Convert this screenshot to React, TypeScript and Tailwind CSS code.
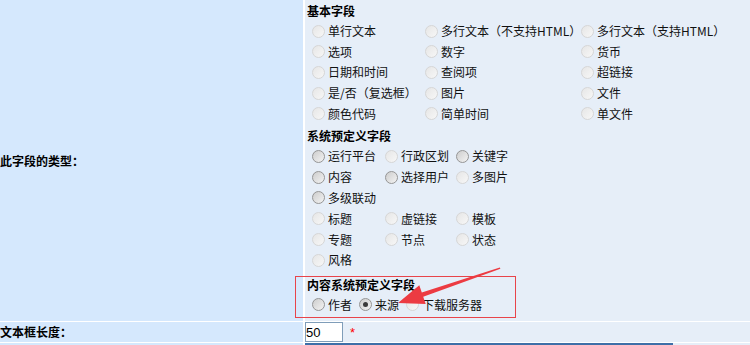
import clsx from 'clsx'

type Tone = 'light' | 'dark'

interface Opt {
  label: string
  tone?: Tone
  checked?: boolean
}

const basicFields: string[][] = [
  ['单行文本', '多行文本（不支持HTML）', '多行文本（支持HTML）'],
  ['选项', '数字', '货币'],
  ['日期和时间', '查阅项', '超链接'],
  ['是/否（复选框）', '图片', '文件'],
  ['颜色代码', '简单时间', '单文件'],
]

const systemFields: Opt[][] = [
  [{ label: '运行平台', tone: 'dark' }, { label: '行政区划' }, { label: '关键字', tone: 'dark' }],
  [{ label: '内容', tone: 'dark' }, { label: '选择用户', tone: 'dark' }, { label: '多图片' }],
  [{ label: '多级联动', tone: 'dark' }],
  [{ label: '标题' }, { label: '虚链接' }, { label: '模板' }],
  [{ label: '专题' }, { label: '节点' }, { label: '状态' }],
  [{ label: '风格' }],
]

const contentFields: Opt[] = [
  { label: '作者', tone: 'dark' },
  { label: '来源', tone: 'dark', checked: true },
  { label: '下载服务器' },
]

function Radio({ tone = 'light', checked = false }: { tone?: Tone; checked?: boolean }) {
  return (
    <span
      className={clsx(
        'inline-flex items-center justify-center w-[13px] h-[13px] rounded-full border shrink-0',
        tone === 'dark'
          ? 'border-[#959595] bg-[linear-gradient(135deg,#cdcdcd,#f3f3f3)]'
          : 'border-[#d6d6d6] bg-[linear-gradient(135deg,#e6e6e6,#f7f7f7)]'
      )}
    >
      {checked && <span className="w-[5px] h-[5px] rounded-full bg-[#3a3a3a]" />}
    </span>
  )
}

function Option({ label, tone, checked }: Opt) {
  return (
    <label className="flex items-center whitespace-nowrap">
      <Radio tone={tone} checked={checked} />
      <span className="ml-[3px]">{label}</span>
    </label>
  )
}

export default function App() {
  return (
    <div className="relative w-[750px] h-[345px] overflow-hidden bg-white text-[12px] leading-none text-[#111] font-['Noto_Sans_CJK_SC',sans-serif]">
      <div className="grid grid-cols-[303px_1fr] grid-rows-[321px_20px_40px] gap-x-[2px] gap-y-[1px]">
        {/* Field type */}
        <div className="flex items-center bg-[#d5e8fd] font-bold text-black">此字段的类型：</div>
        <div className="bg-[#e6eef8] pl-[2px] pt-[1px]">
          <div className="h-[20px] flex items-center font-bold text-black">基本字段</div>
          {basicFields.map((row, i) => (
            <div key={i} className="grid grid-cols-[113px_156px_1fr] h-[20.6px] items-center pl-[5px]">
              {row.map((label) => (
                <Option key={label} label={label} />
              ))}
            </div>
          ))}

          <div className="mt-[2px] h-[20px] flex items-center font-bold text-black">系统预定义字段</div>
          {systemFields.map((row, i) => (
            <div key={i} className="grid grid-cols-[73px_71px_1fr] h-[20.8px] items-center pl-[5px]">
              {row.map((o) => (
                <Option key={o.label} {...o} />
              ))}
            </div>
          ))}

          <div className="mt-[4px] h-[20px] flex items-center font-bold text-black">内容系统预定义字段</div>
          <div className="flex h-[20px] items-center gap-[7px] pl-[5px]">
            {contentFields.map((o) => (
              <Option key={o.label} {...o} />
            ))}
          </div>
        </div>

        {/* Text box length */}
        <div className="flex items-center bg-[#d5e8fd] font-bold text-black">文本框长度：</div>
        <div className="flex items-center bg-[#e6eef8]">
          <input
            defaultValue="50"
            className="w-[38px] h-[20px] border border-[#7f9db9] bg-white px-0 text-[13px] text-black outline-none font-['Liberation_Sans',sans-serif]"
          />
          <span className="ml-[7px] text-[13px] text-[#ff0000] font-['Liberation_Sans',sans-serif]">*</span>
        </div>

        <div className="bg-[#d5e8fd]" />
        <div className="bg-[#e6eef8]">
          <div className="w-[368px] h-[30px] border-2 border-[#3e6fa8] bg-white" />
        </div>
      </div>

      {/* annotation */}
      <div className="absolute left-[295px] top-[276px] w-[221px] h-[42px] border border-[#e8444a] pointer-events-none" />
      <svg className="absolute inset-0 pointer-events-none" width="750" height="345" viewBox="0 0 750 345">
        <polygon
          points="499.8,267.4 500.4,268.8 423.2,296.7 425.7,304 398,303 419.3,285.2 421.8,292.5"
          fill="#ec3b42"
        />
      </svg>
    </div>
  )
}
